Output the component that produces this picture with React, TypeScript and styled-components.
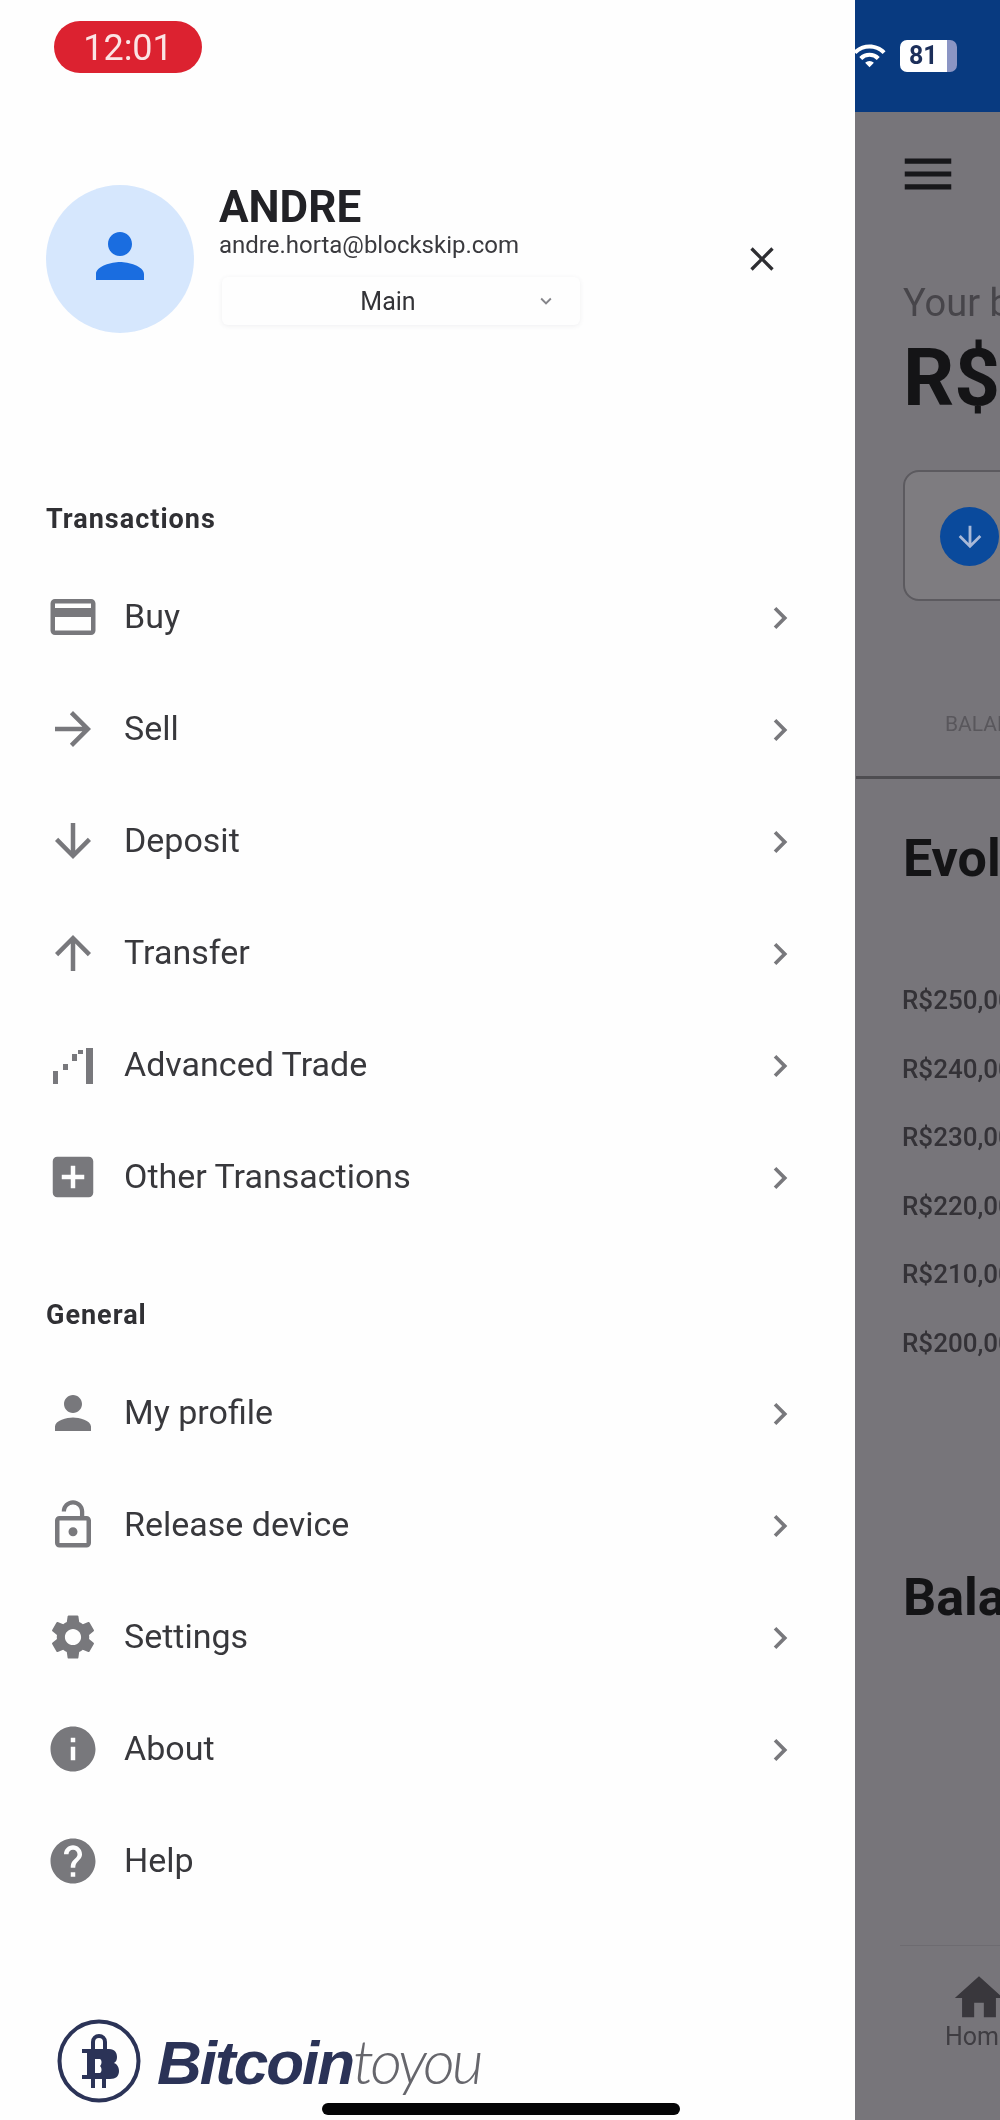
import React from 'react';
import styled, { createGlobalStyle } from 'styled-components';
import {
  MdAddBox,
  MdArrowDownward,
  MdArrowForward,
  MdArrowUpward,
  MdChevronRight,
  MdClose,
  MdCreditCard,
  MdHelp,
  MdHome,
  MdInfo,
  MdKeyboardArrowDown,
  MdLockOpen,
  MdMenu,
  MdPerson,
  MdSettings,
  MdWifi,
} from 'react-icons/md';

const GlobalStyle = createGlobalStyle`
  html, body {
    margin: 0;
    padding: 0;
    background: #fff;
  }
  * {
    box-sizing: border-box;
  }
`;

const Screen = styled.div`
  position: relative;
  width: 1000px;
  height: 2120px;
  display: flex;
  overflow: hidden;
  font-family: Roboto, 'Liberation Sans', sans-serif;
  filter: blur(0.6px);
`;

const Drawer = styled.aside`
  width: 855px;
  flex: none;
  display: flex;
  flex-direction: column;
  background: #fefefe;
  padding: 21px 0 0 46px;
`;

const TimePill = styled.div`
  width: 148px;
  height: 52px;
  margin-left: 8px;
  border-radius: 26px;
  background: #dc2230;
  color: #fbe4e4;
  font-size: 36px;
  line-height: 54px;
  text-align: center;
`;

const Header = styled.header`
  display: flex;
  align-items: center;
  gap: 25px;
  margin-top: 112px;
  padding-right: 73px;
`;

const Avatar = styled.div`
  width: 148px;
  height: 148px;
  flex: none;
  border-radius: 50%;
  background: #d6e7fd;
  color: #1a6de0;
  display: flex;
  align-items: center;
  justify-content: center;
  padding-bottom: 6px;
  font-size: 72px;
`;

const Identity = styled.div`
  flex: 1;
  align-self: flex-start;
  display: flex;
  flex-direction: column;
  align-items: flex-start;
`;

const Name = styled.div`
  color: #222226;
  font-size: 44px;
  font-weight: 700;
  line-height: 44px;
`;

const Email = styled.div`
  color: #3a3a3e;
  font-size: 24px;
  line-height: 30px;
  margin-top: 1px;
`;

const AccountSelect = styled.div`
  position: relative;
  width: 358px;
  height: 48px;
  margin: 17px 0 0 3px;
  padding-right: 26px;
  border-radius: 6px;
  box-shadow: 0 1px 5px rgba(60, 60, 90, 0.08);
  color: #333337;
  font-size: 25px;
  line-height: 50px;
  text-align: center;
`;

const SelectCaret = styled.span`
  position: absolute;
  right: 23px;
  top: 13px;
  font-size: 22px;
  line-height: 0;
  color: #85858a;
`;

const CloseButton = styled.div`
  color: #2e2e32;
  font-size: 40px;
  line-height: 0;
`;

const Section = styled.section<{ $gap: number }>`
  margin-top: ${(p) => p.$gap}px;
`;

const SectionTitle = styled.div`
  height: 40px;
  margin-bottom: 23px;
  color: #303034;
  font-size: 27px;
  font-weight: 700;
  letter-spacing: 1px;
  line-height: 42px;
`;

const Row = styled.div`
  height: 112px;
  display: flex;
  align-items: center;
  gap: 24px;
  padding-right: 53px;
`;

const RowIcon = styled.span`
  width: 54px;
  height: 54px;
  flex: none;
  color: #78787c;
  font-size: 54px;
  line-height: 0;
`;

const RowLabel = styled.span`
  flex: 1;
  padding-bottom: 2px;
  color: #38383c;
  font-size: 34px;
`;

const RowChevron = styled.span`
  margin-top: 2px;
  color: #78787c;
  font-size: 44px;
  line-height: 0;
`;

const Logo = styled.div`
  display: flex;
  align-items: center;
  gap: 16px;
  margin: 102px 0 0 11px;
`;

const LogoWord = styled.div`
  color: #2b3357;
  font-family: 'Liberation Sans', sans-serif;
  font-size: 62px;
  font-style: italic;
  font-weight: 700;
  letter-spacing: -2px;
  line-height: 70px;
`;

const LogoThin = styled.span`
  color: #66666c;
  font-family: Lato, sans-serif;
  font-weight: 300;
  letter-spacing: -3.2px;
`;

const Backdrop = styled.div`
  flex: 1;
  min-width: 0;
  display: flex;
  flex-direction: column;
  overflow: hidden;
  background: #77757a;
  white-space: nowrap;
`;

const TopBar = styled.div`
  height: 112px;
  flex: none;
  display: flex;
  align-items: flex-start;
  gap: 13px;
  padding: 38px 0 0 0;
  background: #083a80;
  color: #fff;
  font-size: 35px;
  line-height: 0;

  svg {
    margin-left: -3px;
  }
`;

const Battery = styled.div`
  width: 57px;
  height: 32px;
  margin-top: 2px;
  border-radius: 7px;
  background: linear-gradient(90deg, #fff 82%, #8b95c4 82%);
  color: #1c2f5a;
  font-size: 25px;
  font-weight: 700;
  line-height: 32px;
  padding-left: 9px;
`;

const BackdropBody = styled.div`
  flex: 1;
  display: flex;
  flex-direction: column;
  padding-left: 48px;
`;

const MenuButton = styled.div`
  margin: 31px 0 0 -6px;
  color: #17171a;
  font-size: 62px;
  line-height: 0;
  height: 60px;
`;

const Caption = styled.div`
  margin-top: 79px;
  color: #47454a;
  font-size: 38px;
  line-height: 42px;
`;

const Balance = styled.div`
  color: #141416;
  font-size: 80px;
  font-weight: 700;
  line-height: 80px;
  margin-top: 14px;
`;

const ActionCard = styled.div`
  width: 200px;
  height: 131px;
  flex: none;
  margin-top: 52px;
  padding: 35px 0 0 35px;
  border: 2px solid #5c5a5f;
  border-radius: 16px;
  background: #7e7c80;
`;

const ActionCircle = styled.div`
  width: 59px;
  height: 59px;
  border-radius: 50%;
  background: #0a4a9c;
  color: #a9b9d8;
  font-size: 34px;
  display: flex;
  align-items: center;
  justify-content: center;
`;

const TabLabel = styled.div`
  margin: 110px 0 0 42px;
  color: #59575c;
  font-size: 21px;
  line-height: 26px;
`;

const TabRule = styled.div`
  height: 3px;
  flex: none;
  margin: 39px 0 0 -47px;
  background: #4e4d51;
`;

const Heading = styled.div<{ $top: number }>`
  margin-top: ${(p) => p.$top}px;
  color: #141416;
  font-size: 52px;
  font-weight: 700;
  line-height: 56px;
`;

const AxisList = styled.div`
  display: flex;
  flex-direction: column;
  margin: 79px 0 0 -1px;
`;

const AxisLabel = styled.div`
  height: 68.5px;
  color: #343237;
  font-size: 26px;
  font-weight: 500;
  line-height: 68.5px;
`;

const BottomNav = styled.nav`
  margin-top: auto;
  height: 175px;
  border-top: 1px solid #6d6b70;
  display: flex;
  flex-direction: column;
  padding: 23px 0 0 45px;
  margin-left: -3px;
`;

const NavIcon = styled.div`
  margin-left: 5px;
  color: #39373c;
  font-size: 58px;
  line-height: 0;
  height: 54px;
`;

const NavLabel = styled.div`
  color: #3f3d42;
  font-size: 25px;
  line-height: 28px;
`;

const HomeIndicator = styled.div`
  position: absolute;
  left: 322px;
  bottom: 5px;
  width: 358px;
  height: 12px;
  border-radius: 6px;
  background: #050506;
`;

const TradeIcon = () => (
  <svg width="54" height="54" viewBox="0 0 54 54" fill="currentColor">
    <rect x="7" y="33" width="5" height="13" />
    <rect x="17" y="26" width="5" height="6" />
    <rect x="26" y="16" width="5" height="7" />
    <rect x="32" y="12" width="5" height="4" />
    <rect x="40" y="10" width="7" height="36" />
  </svg>
);

const CoinMark = () => (
  <svg width="84" height="84" viewBox="0 0 84 84" fill="none" stroke="#2b3357">
    <circle cx="42" cy="42" r="39.5" strokeWidth="4" />
    <path d="M36 30v-7a6 6 0 0 1 12 0v7" strokeWidth="4" />
    <path d="M36 60v9M47 60v9" strokeWidth="4" />
    <path
      d="M25 30h27c6 0 8 4 8 8 0 3-1 5-3 6 3 1 5 4 5 8 0 5-3 8-9 8H25v-4h5V34h-5z M38 40v14h5c2-1 2-5 0-7 2-2 2-6 0-7z"
      fill="#2b3357"
      fillRule="evenodd"
      stroke="none"
    />
  </svg>
);

const transactions = [
  { label: 'Buy', icon: <MdCreditCard /> },
  { label: 'Sell', icon: <MdArrowForward /> },
  { label: 'Deposit', icon: <MdArrowDownward /> },
  { label: 'Transfer', icon: <MdArrowUpward /> },
  { label: 'Advanced Trade', icon: <TradeIcon /> },
  { label: 'Other Transactions', icon: <MdAddBox /> },
];

const general = [
  { label: 'My profile', icon: <MdPerson />, chevron: true },
  { label: 'Release device', icon: <MdLockOpen />, chevron: true },
  { label: 'Settings', icon: <MdSettings />, chevron: true },
  { label: 'About', icon: <MdInfo />, chevron: true },
  { label: 'Help', icon: <MdHelp />, chevron: false },
];

const axis = ['R$250,00', 'R$240,00', 'R$230,00', 'R$220,00', 'R$210,00', 'R$200,00'];

const MenuRow = ({ label, icon, chevron = true }: { label: string; icon: React.ReactNode; chevron?: boolean }) => (
  <Row>
    <RowIcon>{icon}</RowIcon>
    <RowLabel>{label}</RowLabel>
    {chevron && (
      <RowChevron>
        <MdChevronRight />
      </RowChevron>
    )}
  </Row>
);

const App = () => {
  return (
    <Screen>
      <GlobalStyle />
      <Drawer>
        <TimePill>12:01</TimePill>
        <Header>
          <Avatar>
            <MdPerson />
          </Avatar>
          <Identity>
            <Name>ANDRE</Name>
            <Email>andre.horta@blockskip.com</Email>
            <AccountSelect>
              Main
              <SelectCaret>
                <MdKeyboardArrowDown />
              </SelectCaret>
            </AccountSelect>
          </Identity>
          <CloseButton>
            <MdClose />
          </CloseButton>
        </Header>
        <Section $gap={165}>
          <SectionTitle>Transactions</SectionTitle>
          {transactions.map((item) => (
            <MenuRow key={item.label} label={item.label} icon={item.icon} />
          ))}
        </Section>
        <Section $gap={61}>
          <SectionTitle>General</SectionTitle>
          {general.map((item) => (
            <MenuRow key={item.label} label={item.label} icon={item.icon} chevron={item.chevron} />
          ))}
        </Section>
        <Logo>
          <CoinMark />
          <LogoWord>
            Bitcoin<LogoThin>toyou</LogoThin>
          </LogoWord>
        </Logo>
      </Drawer>
      <Backdrop>
        <TopBar>
          <MdWifi />
          <Battery>81</Battery>
        </TopBar>
        <BackdropBody>
          <MenuButton>
            <MdMenu />
          </MenuButton>
          <Caption>Your balance</Caption>
          <Balance>R$ 0,00</Balance>
          <ActionCard>
            <ActionCircle>
              <MdArrowDownward />
            </ActionCircle>
          </ActionCard>
          <TabLabel>BALANCE</TabLabel>
          <TabRule />
          <Heading $top={52}>Evolution</Heading>
          <AxisList>
            {axis.map((value) => (
              <AxisLabel key={value}>{value}</AxisLabel>
            ))}
          </AxisList>
          <Heading $top={193}>Balance</Heading>
          <BottomNav>
            <NavIcon>
              <MdHome />
            </NavIcon>
            <NavLabel>Home</NavLabel>
          </BottomNav>
        </BackdropBody>
      </Backdrop>
      <HomeIndicator />
    </Screen>
  );
};

export default App;
